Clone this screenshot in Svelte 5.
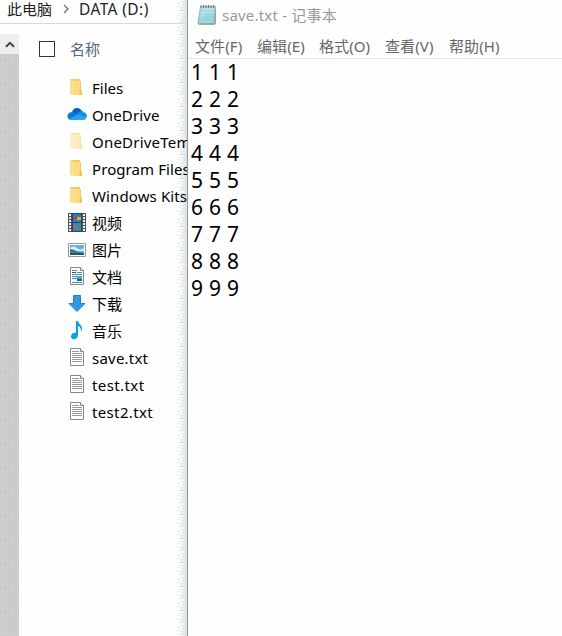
<script>
  const files = [
    ['folder', 'Files', 0], ['cloud', 'OneDrive', 0.13], ['faded', 'OneDriveTem', 0.22],
    ['folder', 'Program Files', 0.08], ['folder', 'Windows Kits', 0.12], ['video', '视频', 0],
    ['picture', '图片', 0], ['document', '文档', 0], ['download', '下载', 0],
    ['music', '音乐', 0], ['text', 'save.txt', 0.22], ['text', 'test.txt', 0.4], ['text', 'test2.txt', 0.35]
  ];
  const menu = [['文件(F)', 48], ['编辑(E)', 48], ['格式(O)', 52], ['查看(V)', 50], ['帮助(H)', 52]];
  const lines = [1, 2, 3, 4, 5, 6, 7, 8, 9];
</script>

<div class="desktop">
  <section class="explorer">
    <svg class="shadow" width="11" height="636">
      <defs>
        <pattern id="grain" width="11" height="12" patternUnits="userSpaceOnUse">
          <path d="M4 1.500h3M2 3.500h2M6 4.500h4M1 6.500h2M4 7.500h4M6 9.500h2M3 10.500h4M8 11.500h2" stroke="#d8e9ef"/>
          <path d="M7 1.500h2M6 3.500h3M4 4.500h1M7 6.500h2M5 8.500h2M8 9.500h2" stroke="#e2edf1"/>
          <path d="M8 2.500h1M5 6.500h1M7 10.500h1M4 11.500h1" stroke="#faf3da"/>
        </pattern>
        <linearGradient id="edge"><stop offset="0" stop-color="#e9edef" stop-opacity="0"/><stop offset="1" stop-color="#d8dcde"/></linearGradient>
      </defs>
      <rect width="11" height="636" fill="url(#grain)"/>
      <rect x="5" width="6" height="636" fill="url(#edge)"/>
    </svg>
    <header class="path">
      <span>此电脑</span>
      <svg width="6" height="10" viewBox="0 0 6 10"><path d="M1 1l4 4-4 4" fill="none" stroke="#777" stroke-width="1.4"/></svg>
      <span class="drive">DATA (D:)</span>
    </header>
    <div class="body">
      <div class="scroll">
        <div class="up"><svg width="10" height="7" viewBox="0 0 10 7"><path d="M1 5.800L5 1.800l4 4" fill="none" stroke="#444" stroke-width="2"/></svg></div>
        <div class="thumb"></div>
      </div>
      <div class="list">
        <div class="head"><i class="box"></i><span>名称</span></div>
        {#each files as [kind, name, track]}
          <div class="row">
            <svg width="20" height="20" viewBox="0 0 20 20">
              {#if kind === 'folder' || kind === 'faded'}
                <g opacity={kind === 'faded' ? 0.5 : 1}>
                  <path d="M3 1h10v2h1v9h1v5h-4l-8-1z" fill="#f0ca64"/>
                  <path d="M7 3h6v14H7z" fill="#f8dc86"/>
                  <path d="M3 1l4 2v14l-4-2z" fill="#fbdf91"/>
                  <path d="M12.500 12H15v5h-2.500z" fill="#efc45d"/>
                </g>
              {:else if kind === 'cloud'}
                <path d="M5 7C6 2.500 12 1 15 6l-4 4-7 1z" fill="#0364b8"/>
                <path d="M4.500 15C-1 15-1 7.500 5 7q3-.5 6 3l-1 5z" fill="#0f78d4"/>
                <path d="M10 9q2-3.500 5-3 1 0 1.500 1.200c3.500.3 4 4.500 3 5.300l-5 .5z" fill="#1490df"/>
                <path d="M2 14l9-4.800 8.500 3.800Q19 15 16 15H4.500Q3 15 2 14z" fill="#28a8ea"/>
              {:else if kind === 'video'}
                <path d="M1 0h18v19H1z" fill="#50514d"/>
                <path d="M5 0h10v19H5z" fill="#1c4777"/>
                <path d="M6 1h8v8H6z" fill="#2f78c7"/><path d="M6 10h8v8H6z" fill="#3b82c9"/>
                <path d="M6 5l4-2 1 3H6z" fill="#ca3b2c"/><path d="M10 4h4v3h-4z" fill="#d2b33d"/>
                <path d="M8 7h4v1H8zM9 15l5-2v4H8z" fill="#4c9848"/><path d="M6 14l3-2 1 2-4 2z" fill="#d65c32"/>
                <path d="M3 1v18M17 1v18" stroke="#eee" stroke-width="2" stroke-dasharray="2 1"/>
              {:else if kind === 'picture'}
                <path d="M1.500 3.500h17v13h-17z" fill="#fff" stroke="#96989b"/>
                <path d="M3 5h14v10H3z" fill="#6daee9"/>
                <path d="M3 8q4-3 7 0t7 0v3H3z" fill="#d8effb"/>
                <path d="M3 9q4 0 8 3l6 1v2H3z" fill="#3f8069"/><path d="M3 13h14v2H3z" fill="#294f80"/>
              {:else if kind === 'document' || kind === 'text'}
                <path d="M3.500.500h10l3 3v14h-13z" fill="#fff" stroke="#888"/>
                <path d="M13.500.500v3h3" fill="#eee" stroke="#888"/>
                {#if kind === 'document'}
                  <path d="M5 3.500h5M10 5.500h5M5 7.500h10M5 9.500h5M5 11.500h5M5 15.500h10" stroke="#3d91ba"/>
                  <path d="M5 5h4v1H5z" fill="#24577e"/><path d="M10 9h5v5h-5z" fill="#4ca5c8"/><path d="M10 12h5v2h-5z" fill="#1e6289"/>
                {:else}
                  <path d="M5 3.500h7M5 5.500h10M5 7.500h10M5 9.500h10M5 11.500h10M5 13.500h10" stroke="#999"/>
                {/if}
              {:else if kind === 'download'}
                <path d="M6.500 1.500h7v8h4.500L10 17.500l-8-8h4.500z" fill="#3596e4" stroke="#2380cf"/>
              {:else}
                <path d="M9 0h2c.3 3 4.500 4 4 8-.2 1.300-1 2-1.500 2 1-3-1-4.500-2.500-5v9c0 5-7 5.500-7 1.800C4 12.500 7 11 9 12z" fill="#0e9bf1"/>
              {/if}
            </svg>
            <span style="letter-spacing: {track}px">{name}</span>
          </div>
        {/each}
      </div>
    </div>
  </section>
  <section class="notepad">
    <header class="title">
      <svg width="20" height="22" viewBox="0 0 20 22">
        <path d="M4 3h15v17l-2 1H1l2-2z" fill="#b5a77e"/>
        <path d="M3.500 2.500h15L17 19.500H.8z" fill="#9ed6e3" stroke="#75a7b3" stroke-width=".7"/>
        <path d="M4 4h13l-.5 6Q9 9 3 15z" fill="#b5e1e9"/>
        <path d="M4 7h13M3.500 10h13M3 13h13M2.500 16h13" stroke="#78bed0" stroke-width=".4"/>
        <path d="M4 1v3M6.500 1v3M9 1v3M11.500 1v3M14 1v3M16.500 1v3" stroke="#777" stroke-width="1"/>
      </svg>
      <span>save.txt - 记事本</span>
    </header>
    <nav>{#each menu as [item, width]}<span style="width: {width}px">{item}</span>{/each}</nav>
    <main>{#each lines as n}<div>{n} {n} {n}</div>{/each}</main>
  </section>
</div>

<style>
  :global(body) { margin: 0; overflow: hidden; }
  * { box-sizing: border-box; }
  svg { display: block; flex: none; }
  .desktop { display: flex; width: 562px; height: 636px; overflow: hidden; background: #fefefe; font: 15px/20px "Noto Sans", "Noto Sans CJK SC", sans-serif; color: #000; white-space: nowrap; }
  .explorer { position: relative; width: 187px; flex: none; overflow: hidden; }
  .path { position: relative; display: flex; align-items: center; height: 24px; padding: 0 0 5px 7px; border-bottom: 1px solid #d9d9d9; color: #222; }
  .path svg { margin: 0 10px 0 11px; }
  .drive { font-size: 15.5px; letter-spacing: .4px; }
  .body { position: relative; display: flex; height: 612px; }
  .scroll { width: 19px; padding-top: 10px; flex: none; }
  .up { height: 20px; display: flex; justify-content: center; align-items: center; background: #eee; }
  .thumb { height: 582px; background: #cbcbcb; background-image: radial-gradient(#d5d5d5 .6px, transparent .8px); background-size: 5px 6px; }
  .list { padding-left: 20px; }
  .head { display: flex; align-items: center; height: 51px; padding-bottom: 2px; color: #4e6685; }
  .box { width: 16px; height: 16px; border: 1px solid #333; margin-right: 15px; }
  .row { display: flex; align-items: center; height: 27px; padding: 0 0 1px 28px; }
  .row span { margin-left: 5px; }
  .shadow { position: absolute; top: 0; right: 0; }
  .notepad { width: 375px; border-left: 1px solid #999; background: #fefefe; }
  .title { display: flex; align-items: center; height: 33px; padding: 0 0 3px 9px; color: #999; }
  .title span { margin-left: 5px; letter-spacing: .2px; }
  nav { display: flex; gap: 14px; align-items: center; height: 26px; padding-left: 7px; border-bottom: 1px solid #e6e6e6; color: #666; font-size: 15px; letter-spacing: .1px; }
  main { padding-left: 3px; font-size: 21px; line-height: 27px; word-spacing: .5px; color: #000; }
</style>
